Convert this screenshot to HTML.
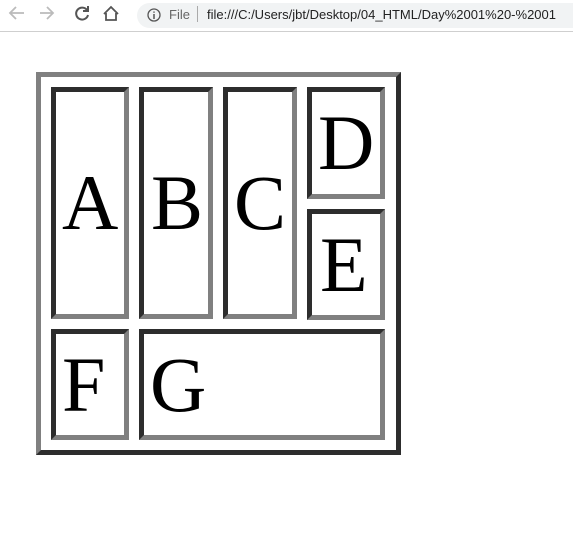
<!DOCTYPE html>
<html><head><style>
body{margin:0;width:573px;height:534px;background:#fff;position:relative;overflow:hidden;font-family:"Liberation Serif",serif}
.bar{position:absolute;left:0;top:0;width:573px;height:31px;border-bottom:1px solid #cfcfcf;background:#fff}
.pill{position:absolute;left:137px;top:3px;width:460px;height:25px;border-radius:13px;background:#f1f3f4}
.t{position:absolute;font-family:"Liberation Sans",sans-serif;font-size:13px;top:7px;color:#333}
.outer{position:absolute;left:36px;top:72px;width:355px;height:373px;border:5px solid;border-color:#808080 #2d2d2d #2d2d2d #808080}
.b{position:absolute;border:5px solid;border-color:#2d2d2d #808080 #808080 #2d2d2d;box-sizing:border-box;font-size:78px;line-height:1;display:flex;align-items:center;padding-left:6px;color:#000}
</style></head><body>
<div class="bar">
<svg width="130" height="31" style="position:absolute;left:0;top:0" fill="none" stroke-width="1.8">
<path d="M24 13H11M16 7l-6 6 6 6" stroke="#bbb"/>
<path d="M40 13h13M47 7l6 6-6 6" stroke="#bbb"/>
<path d="M87 10a6 6 0 1 0 1 5M88 6v5h-5" stroke="#555" stroke-width="2"/>
<path d="M104 14l7-7 7 7M106 13v7h10v-7" stroke="#555"/>
</svg>
<div class="pill"></div>
<svg width="16" height="16" style="position:absolute;left:146px;top:7px"><circle cx="8" cy="8" r="6" fill="none" stroke="#555" stroke-width="1.3"/><path d="M8 7v5M8 4.5v1.3" stroke="#555" stroke-width="1.5"/></svg>
<span class="t" style="left:169px;color:#666">File</span>
<span style="position:absolute;left:197px;top:6px;width:1px;height:16px;background:#aaa"></span>
<span class="t" style="left:207px;color:#222">file:///C:/Users/jbt/Desktop/04_HTML/Day%2001%20-%2001</span>
</div>
<div class="outer"></div>
<div class="b" style="left:51px;top:87px;width:78px;height:232px">A</div>
<div class="b" style="left:139px;top:87px;width:74px;height:232px;padding-left:7px">B</div>
<div class="b" style="left:223px;top:87px;width:74px;height:232px;padding-left:6px">C</div>
<div class="b" style="left:307px;top:87px;width:78px;height:112px;padding-left:6px">D</div>
<div class="b" style="left:307px;top:209px;width:78px;height:111px;padding-left:8px">E</div>
<div class="b" style="left:51px;top:329px;width:78px;height:111px">F</div>
<div class="b" style="left:139px;top:329px;width:246px;height:111px;padding-left:6px">G</div>
</body></html>
